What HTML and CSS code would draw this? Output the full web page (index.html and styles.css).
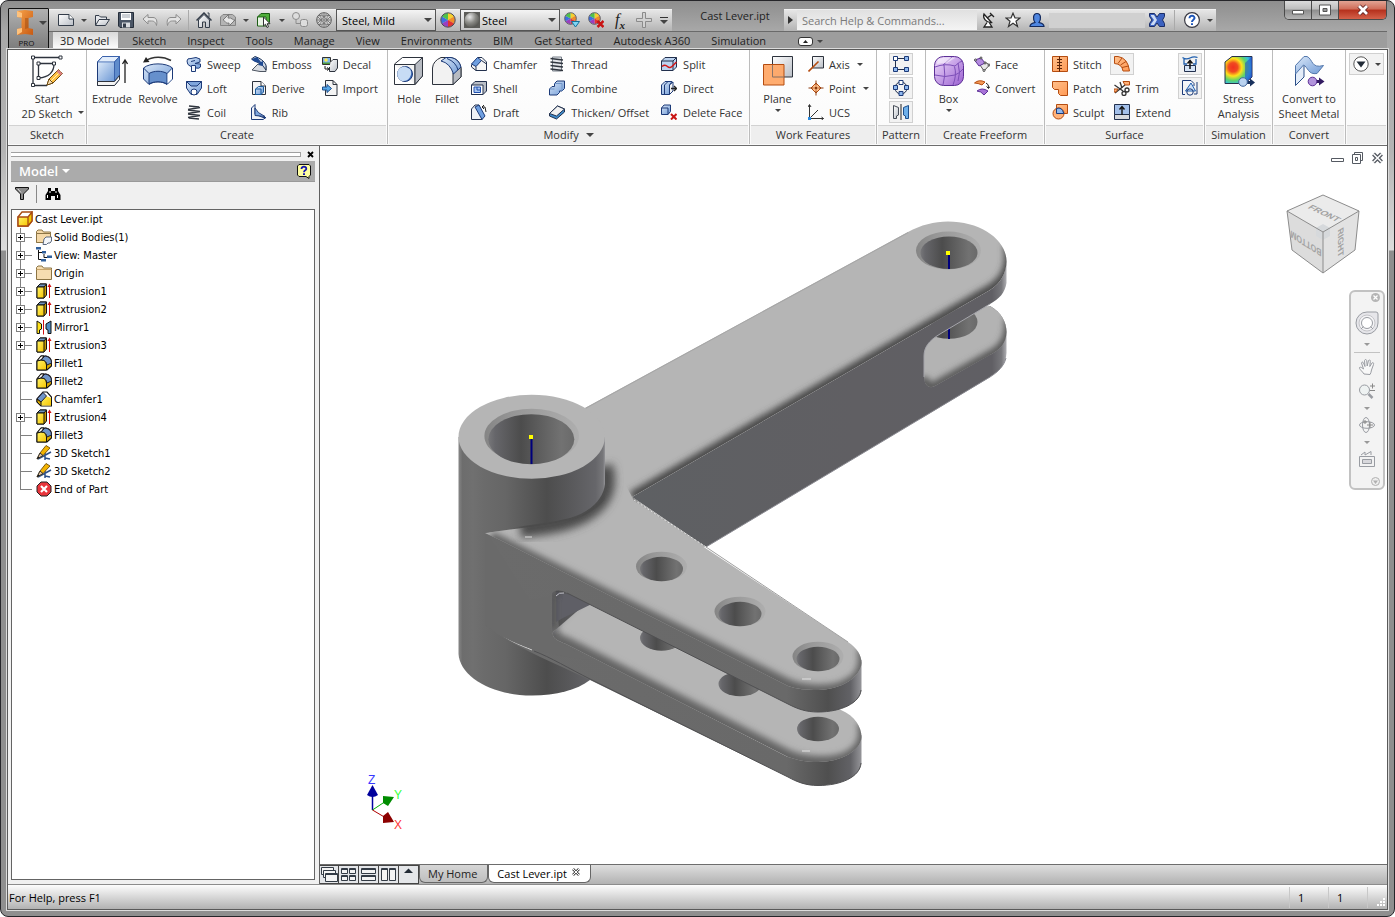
FILE: index.html
```html
<!DOCTYPE html>
<html lang="en">
<head>
  <meta charset="UTF-8">
  <title>Cast Lever.ipt</title>
  <meta name="viewport" content="width=device-width, initial-scale=1.0">
  <link rel="stylesheet" href="styles.css">
</head>
<body>

  <!-- icon sprite -->
  <svg class="sprite" aria-hidden="true">
    <defs>
      <linearGradient id="blue" x1="0" y1="0" x2="1" y2="1"><stop offset="0" stop-color="#dbe8f8"/><stop offset="1" stop-color="#6f9ad6"/></linearGradient>
      <linearGradient id="grey" x1="0" y1="0" x2="1" y2="1"><stop offset="0" stop-color="#fff"/><stop offset="1" stop-color="#b9bec6"/></linearGradient>
      <linearGradient id="orange" x1="0" y1="0" x2="1" y2="1"><stop offset="0" stop-color="#ffc08c"/><stop offset="1" stop-color="#ff9a55"/></linearGradient>
      <linearGradient id="purple" x1="0" y1="0" x2="1" y2="1"><stop offset="0" stop-color="#f0defc"/><stop offset="1" stop-color="#9a5fd0"/></linearGradient>
      <linearGradient id="yellow" x1="0" y1="0" x2="1" y2="1"><stop offset="0" stop-color="#fff36a"/><stop offset="1" stop-color="#f7c600"/></linearGradient>
      <linearGradient id="logo" x1="0" y1="0" x2="1" y2="1"><stop offset="0" stop-color="#f7a24a"/><stop offset="1" stop-color="#c85a12"/></linearGradient>
      <radialGradient id="ball" cx=".35" cy=".3" r=".8"><stop offset="0" stop-color="#e8e8e8"/><stop offset=".5" stop-color="#8b8b86"/><stop offset="1" stop-color="#4c4c48"/></radialGradient>
      <radialGradient id="heat" cx=".3" cy=".4" r=".85"><stop offset="0" stop-color="#f03020"/><stop offset=".2" stop-color="#f04a20"/><stop offset=".38" stop-color="#ffe21a"/><stop offset=".58" stop-color="#5fd36a"/><stop offset=".75" stop-color="#35bfe0"/><stop offset="1" stop-color="#2447c8"/></radialGradient>
    </defs>

    <symbol id="i-new" viewBox="0 0 16 16"><path d="M.5 2.500H11L15.500 7V13.500H.5Z" fill="url(#grey)" stroke="#333c49"/><path d="M11 2.500V7H15.500" fill="#fff" stroke="#333c49"/></symbol>
    <symbol id="i-open" viewBox="0 0 16 16"><path d="M1.500 13V3.500H5L6.500 5H12.500V7" fill="#e4e6ea" stroke="#333c49"/><path d="M1.500 13.500L5 7.500H15.500L11.500 13.500Z" fill="url(#grey)" stroke="#333c49"/></symbol>
    <symbol id="i-save" viewBox="0 0 16 16"><path d="M.5.5H15.500V15.500H2L.5 14Z" fill="#4b5666" stroke="#262e3a"/><path d="M3 1H13V8H3Z" fill="#fff"/><path d="M4 3H12M4 5H12" stroke="#9aa2ad"/><path d="M4 10.500H12V15.500H4Z" fill="#d9dce0"/><path d="M5 11.500H8V15.500H5Z" fill="#333c49"/></symbol>
    <symbol id="i-undo" viewBox="0 0 16 16"><path d="M1 7L6 2.500V5.500H11C14.500 5.500 15.500 9 14.500 13.500C13.500 10 12 9 9.500 9H6V12Z" fill="#e3e3e3" stroke="#8c8c8c"/></symbol>
    <symbol id="i-redo" viewBox="0 0 16 16"><path d="M15 7L10 2.500V5.500H5C1.500 5.500.5 9 1.500 13.500C2.500 10 4 9 6.500 9H10V12Z" fill="#e3e3e3" stroke="#8c8c8c"/></symbol>
    <symbol id="i-home" viewBox="0 0 16 16"><path d="M2.500 8V15.500H6.500V10H9.500V15.500H13.500V8L8 2.500Z" fill="url(#grey)" stroke="#333c49"/><path d="M11.500 1H13V5" fill="none" stroke="#333c49"/><path d="M.5 8.500L8 1L15.500 8.500" fill="none" stroke="#333c49" stroke-width="1.500"/></symbol>
    <symbol id="i-update" viewBox="0 0 16 16"><path d="M.5 13.500V5L3 2.500H12.500L15.500 5V13.500Z" fill="#b4b4b4" stroke="#858585"/><path d="M3 8L9 2L8 6C12 5 13 9 15 8L9 14V11C5 12 5 8 3 8Z" fill="#e6e6e6" stroke="#777"/></symbol>
    <symbol id="i-select" viewBox="0 0 16 16"><path d="M1.500 5L5 1.500H13.500V10L10.500 14H1.500Z" fill="#4fae3a" stroke="#1c5c14"/><path d="M1.500 5H10V14" fill="none" stroke="#1c5c14"/><path d="M2 5.500H9.500V13.500H2Z" fill="#e8f3e4"/><path d="M7.500 5V14L9.500 12.200L11 15.500L12.500 14.800L11.200 11.700H14Z" fill="#fff" stroke="#333"/></symbol>
    <symbol id="i-link" viewBox="0 0 16 16"><circle cx="4" cy="4" r="3.500" fill="#ddd" stroke="#8c8c8c"/><path d="M4 7.500V11.500H8" fill="none" stroke="#8c8c8c"/><rect x="8.500" y="7.500" width="7" height="7" rx="2" fill="#ddd" stroke="#8c8c8c"/></symbol>
    <symbol id="i-globe" viewBox="0 0 16 16"><circle cx="8" cy="8" r="7.300" fill="#ddd" stroke="#555"/><path d="M1 8H15M8 1V15M3 3Q8 8 3 13M13 3Q8 8 13 13M3 3Q8 6 13 3M3 13Q8 10 13 13M5 1.500L14 11M2 5L11 14.500M11 1.500L2 11M14 5L5 14.500" fill="none" stroke="#777"/></symbol>
    <symbol id="i-wheel" viewBox="0 0 16 16"><path d="M8 8V1A7 7 0 0 1 14 4.500Z" fill="#f6d02c"/><path d="M8 8L14 4.500A7 7 0 0 1 14 11.500Z" fill="#f08c28"/><path d="M8 8L14 11.500A7 7 0 0 1 8 15Z" fill="#e23232"/><path d="M8 8V15A7 7 0 0 1 2 11.500Z" fill="#9a3fc0"/><path d="M8 8L2 11.500A7 7 0 0 1 2 4.500Z" fill="#3d6fe0"/><path d="M8 8L2 4.500A7 7 0 0 1 8 1Z" fill="#4fc04a"/><circle cx="8" cy="8" r="7.200" fill="none" stroke="#4a4a55"/></symbol>
    <symbol id="i-wheel-down" viewBox="0 0 16 16"><use href="#i-wheel" width="13" height="13"/><path d="M7.500 9.500H15.500L11.500 15Z" fill="#7fd6f4" stroke="#14709c"/></symbol>
    <symbol id="i-wheel-x" viewBox="0 0 16 16"><use href="#i-wheel" width="13" height="13"/><path d="M9.500 9L15.500 15M15.500 9L9.500 15" stroke="#c81414" stroke-width="2.500"/></symbol>
    <symbol id="i-ball" viewBox="0 0 16 16"><path d="M0 0H16V16H0Z" fill="#5c5c58"/><circle cx="8" cy="8" r="7.500" fill="url(#ball)"/></symbol>
    <symbol id="i-plus" viewBox="0 0 16 16"><path d="M6.500.500H9.500V6.500H15.500V9.500H9.500V15.500H6.500V9.500H.5V6.500H6.500Z" fill="#d2d2d2" stroke="#8b8b8b"/></symbol>
    <symbol id="i-dish" viewBox="0 0 16 16"><path d="M3 2C1.500 6 5 11 10.500 10.500Z" fill="#fff" stroke="#222" stroke-width="1.300"/><path d="M6 6L11 2.500M9 1L13 5" stroke="#222" stroke-width="1.300"/><path d="M6 10.500L3 15H11L8.500 11" fill="#fff" stroke="#222" stroke-width="1.300"/></symbol>
    <symbol id="i-star" viewBox="0 0 16 16"><path d="M8 1.200L10 6H15L11 9.200L12.500 14.500L8 11.300L3.500 14.500L5 9.200L1 6H6Z" fill="#fff" stroke="#333" stroke-width="1.200"/></symbol>
    <symbol id="i-user" viewBox="0 0 16 16"><path d="M1 14.500C1 11.500 4 11 6 10.500C4 8 3.500 1.500 8 1.500S12 8 10 10.500C12 11 15 11.500 15 14.500Z" fill="#4f86e0" stroke="#12285c" stroke-width="1.200"/></symbol>
    <symbol id="i-exchange" viewBox="0 0 16 16"><path d="M.5 1.500H5.500L8 5L10.500 1.500H15.500V4.500L13.500 8L15.500 11.500V14.500H10.500L8 11L5.500 14.500H.5V11.500L3 8L.5 4.500Z" fill="#3c62c0" stroke="#1b2d66"/><path d="M2 3H5L8 8L5 13H2V12L5 8L2 4Z" fill="#cddcf5"/></symbol>
    <symbol id="i-help" viewBox="0 0 16 16"><circle cx="8" cy="8" r="7.400" fill="#fff" stroke="#3a3a44" stroke-width="1.200"/><path d="M5.500 6.200C5.500 2.800 10.700 3 10.500 6.200C10.300 7.800 8 7.700 8 10" fill="none" stroke="#1d55b8" stroke-width="2"/><path d="M7 11.200H9V13H7Z" fill="#1d55b8"/></symbol>

    <symbol id="b-sketch" viewBox="0 0 32 32"><path d="M2 30.500V2.500H30M7.500 23V8.500H23Q23 22 7.500 23M2 30.500H16" fill="none" stroke="#2d333d" stroke-width="1.300"/><g fill="#fff" stroke="#2d333d"><path d="M.5 1H3.500V4H.5ZM28 1H31V4H28ZM.5 28.500H3.500V31.500H.5ZM6 7H9V10H6ZM21.500 7H24.500V10H21.500ZM6 21.500H9V24.500H6Z"/></g><path d="M16 30L18 24L27.500 14.500L31.500 18.500L22 28Z" fill="#ffc043" stroke="#6d4a10"/><path d="M16 30L18 24L22 28Z" fill="#f6dcb2" stroke="#6d4a10"/><path d="M20 26L29.500 16.500" stroke="#fff2b0"/><path d="M27.500 14.500L31.500 18.500L29.500 20.500L25.500 16.500Z" fill="#d98080"/></symbol>
    <symbol id="b-extrude" viewBox="0 0 32 32"><path d="M1.500 7L6.500 1.500H23.500V24L18.500 30.500H1.500Z" fill="#8fb1e2" stroke="#1c3a78"/><path d="M1.500 7H18.500L23.500 1.500H6.500Z" fill="#e2edfb" stroke="#3a62ac"/><path d="M2 7.500H18V26H2Z" fill="url(#blue)"/><path d="M18.500 7V26L23.500 20V1.500Z" fill="#5f8ccc" stroke="#3a62ac"/><path d="M1.500 26.500H18.500L23.500 20.500V24.500L18.500 30.500H1.500Z" fill="#f4f4f4" stroke="#2d333d"/><path d="M29 28V5M26.500 9L29 5L31.500 9" stroke="#222" stroke-width="1.300" fill="none"/></symbol>
    <symbol id="b-revolve" viewBox="0 0 32 32"><path d="M3 6C11 1 21 1 29 5.500" fill="none" stroke="#333" stroke-width="1.500"/><path d="M1 7.500L7.500 7L4 2Z" fill="#222"/><path d="M1.500 13C8 7.500 24 7.500 30.500 13V24L25 29.500C20 26 12 26 7 29.500L1.500 24Z" fill="url(#blue)" stroke="#1c3a78"/><path d="M7 18.500C12 15.500 20 15.500 25 18.500V29C20 26 12 26 7 29Z" fill="#6690cc" stroke="#1c3a78"/><path d="M1.500 13L7 18.500M30.500 13L25 18.500" stroke="#1c3a78"/><path d="M25.500 19L30 14V24L25.500 28.500Z" fill="#fff"/></symbol>
    <symbol id="b-hole" viewBox="0 0 32 32"><path d="M1.500 9L9.500 2.500H29.500V21L22 29.500H1.500Z" fill="#fff" stroke="#2d333d"/><path d="M1.500 9.500H22V29.500" fill="#f3f3f3" stroke="#2d333d"/><path d="M22 9.500L29.500 2.500V21L22 29.500Z" fill="#b7bbc2" stroke="#2d333d"/><circle cx="12" cy="19" r="7.500" fill="#3e6cb8" stroke="#1c3a78"/><path d="M12 11.500A7.500 7.500 0 0 0 9 26A8 8 0 0 0 17 14Z" fill="#c7dcf5"/></symbol>
    <symbol id="b-fillet" viewBox="0 0 32 32"><path d="M1.500 29.500V13Q2 6 10 2.500H20Q29 4 30 14V22L22 29.500Z" fill="#f2f2f2" stroke="#2d333d"/><path d="M22 29.500V18L30 12V22Z" fill="#b7bbc2" stroke="#2d333d"/><path d="M10 6Q19 8 22.500 19L30 12Q28 4 20 2.500H15Z" fill="url(#blue)" stroke="#1c3a78"/><path d="M16 3.500Q25 7 27 15" fill="none" stroke="#1c3a78"/></symbol>
    <symbol id="b-plane" viewBox="0 0 32 32"><path d="M10.500 1.500H30.500V22H10.500Z" fill="url(#grey)" stroke="#2d333d"/><path d="M1.500 9.500H22V30H1.500Z" fill="#ffa563" fill-opacity=".92" stroke="#b44c10"/><path d="M10.500 10V22H22" fill="none" stroke="#8a7468"/></symbol>
    <symbol id="b-box" viewBox="0 0 32 32"><rect x="1.500" y="1.500" width="29" height="29" rx="9" fill="url(#purple)" stroke="#5c2f96"/><path d="M2 12Q12 8 22 11Q27 6 30 6M21.500 11.500Q24 20 20 30M11 10Q13 20 10 30M2 20Q12 23 22 20Q27 18 30 14M10 10L19 2M25 8Q28 18 25 26" fill="none" stroke="#7d4fb8"/><path d="M5 4Q14 1 22 3L14 8Q8 8 4 9Z" fill="#fff" opacity=".5"/></symbol>
    <symbol id="b-stress" viewBox="0 0 32 32"><path d="M2 7L9 1.500H29V22L22 28.500H2Z" fill="url(#heat)" stroke="#26304a"/><path d="M22 8L29 1.500V22L22 28Z" fill="#2447c8" opacity=".55"/><path d="M24 27.500H28" stroke="#18305c" stroke-width="3"/><path d="M27 23.500L32 27.500L27 31.500Z" fill="#18305c"/><circle cx="20" cy="27" r="4.300" fill="#b9d2f0" stroke="#44689c"/></symbol>
    <symbol id="b-sheet" viewBox="0 0 32 32"><path d="M2.500 12L11 4V22L2.500 30.500Z" fill="#e4edf9" stroke="#2c4f88"/><path d="M2.500 10.500L11 1.500H14C20 4 18 14 30.500 10.500L24 18.500C15 20 15 12 10.500 10L2.500 19Z" fill="url(#blue)" stroke="#5478ac"/><path d="M23 26.500H28" stroke="#321a60" stroke-width="3"/><path d="M26 22.500L31.500 26.500L26 30.500Z" fill="#321a60"/><circle cx="19.500" cy="26.500" r="4.300" fill="#b294dc" stroke="#5c2f96"/></symbol>

    <symbol id="s-sweep" viewBox="0 0 16 16"><path d="M1 5Q1 2 5 2.500L10 1.500L14 3V6L9 7.500L14.500 8V11Q13 13 10 12L4 10Q1 9 1 5Z" fill="url(#blue)" stroke="#1c3a78"/><path d="M5 5.500L9 4.500M5.500 9.500H9.500V15.500H5.500Z" fill="#f4f8fd" stroke="#1c3a78"/></symbol>
    <symbol id="s-loft" viewBox="0 0 16 16"><path d="M.5 1.500H15.500V8L11 14.500H5L.5 8Z" fill="url(#blue)" stroke="#1c3a78"/><path d="M.5 1.500H15.500L11 6H5Z" fill="#7fa6dc" stroke="#1c3a78"/><circle cx="8" cy="12" r="3" fill="#fff" stroke="#1c3a78"/></symbol>
    <symbol id="s-coil" viewBox="0 0 16 16"><path d="M3 2L13 3M2 5.500L14 3.500M2 6L14 7.500M2 9.500L14 7.500M2 10L14 11.500M2 13.500L14 11.500M3 14L13 15" stroke="#30363f" stroke-width="1.600"/></symbol>
    <symbol id="s-emboss" viewBox="0 0 16 16"><path d="M1 14L7 8L15 10V15.500H9Z" fill="#d8dce2" stroke="#4d5561"/><path d="M.5 3L4 .5Q12 3 15 9V14Q12 8 6 6Z" fill="#cfd9e8" stroke="#1d3357"/><path d="M2 2.500L6 1L10 6L12 5V10L7 9L9 7L4 6L1 4Z" fill="#1f4a93"/></symbol>
    <symbol id="s-derive" viewBox="0 0 16 16"><path d="M1.500 14.500V1.500H10L14.500 6V14.500Z" fill="#f4f4f4" stroke="#2d333d"/><path d="M10 1.500V6H14.500" fill="#fff" stroke="#2d333d"/><path d="M4.500 9L7.500 6.500H12.500V12L10 14.500H4.500Z" fill="url(#blue)" stroke="#1c5c9c"/><path d="M4.500 9H10V14.500" fill="none" stroke="#1c5c9c"/></symbol>
    <symbol id="s-rib" viewBox="0 0 16 16"><path d="M.5 4L4 .5V10L12 13.500H15L12 15.500H.5Z" fill="#f0f3f8" stroke="#1c3a78"/><path d="M4 4Q6 9 14 12.500L4 11.500Z" fill="#7fa6dc" stroke="#1c3a78"/></symbol>
    <symbol id="s-decal" viewBox="0 0 16 16"><path d="M.5 1.500H8.500V8.500H.5Z" fill="#7db4ef" stroke="#333"/><circle cx="4" cy="4" r="1.800" fill="#ffe94f"/><path d="M1 6.500H8V8H1Z" fill="#4f9c3a"/><path d="M8.500 6L11 3.500H15.500V12L13 15.500H7.500V11" fill="url(#grey)" stroke="#2d333d"/><path d="M3 10V13H6.500M5 11.500L7 13L5 14.500" fill="none" stroke="#222"/></symbol>
    <symbol id="s-import" viewBox="0 0 16 16"><path d="M3.500.5H11L15 4.500V15.500H3.500Z" fill="#f4f4f4" stroke="#2d333d"/><path d="M11 .5V4.500H15" fill="none" stroke="#2d333d"/><path d="M.5 7H5V4.500L9.500 8.500L5 12.500V10H.5Z" fill="#58a9ea" stroke="#1d4f8c"/></symbol>
    <symbol id="s-chamfer" viewBox="0 0 16 16"><path d="M.5 9L7 1.500H11L15.500 6V14.500H5L.5 11Z" fill="#f6f6f6" stroke="#22304d"/><path d="M.5 8L6.500 1.500L10.500 4.500L5 10.500Z" fill="#6f9fe0" stroke="#1c3a78"/><path d="M5 10.500V14.500M10.500 4.500L15.500 8" stroke="#22304d" fill="none"/></symbol>
    <symbol id="s-shell" viewBox="0 0 16 16"><path d="M.5 5L4 1.500H15.500V11L12 14.500H.5Z" fill="#b9bec6" stroke="#22304d"/><path d="M.5 5H12V14.500H.5Z" fill="#fff" stroke="#22304d"/><path d="M3 7H9.500V12.500H3Z" fill="#a9c6f0" stroke="#1f4fae"/><path d="M6 7V10H9.500" fill="none" stroke="#1f4fae"/></symbol>
    <symbol id="s-draft" viewBox="0 0 16 16"><path d="M.5 15.500V5L4 1H8L11 15.500Z" fill="#eef1f6" stroke="#22304d"/><path d="M4 3L8 1L14 12L11 15.500Z" fill="#6f9fe0" stroke="#1c3a78"/><path d="M11 3H14L15 8M13 1L11 3L13 5" fill="none" stroke="#222"/></symbol>
    <symbol id="s-thread" viewBox="0 0 16 16"><path d="M3.500 1H12.500V15H3.500Z" fill="#e4e6ea" stroke="#777e88"/><path d="M1.500 2.500L14 4M1.500 6L14 7.500M1.500 9.500L14 11M1.500 13L14 14.500" stroke="#30363f" stroke-width="1.300"/></symbol>
    <symbol id="s-combine" viewBox="0 0 16 16"><path d="M.5 9L3 6.500H5.500V3.500L8 1H15.500V8.500L13 11H10.500V12.500L8 15H.5Z" fill="url(#blue)" stroke="#1c3a78"/><path d="M5.500 3.500H13V11M.5 9H5.500" fill="none" stroke="#6f94c8"/></symbol>
    <symbol id="s-thicken" viewBox="0 0 16 16"><path d="M.5 9.500L8.500 2L15.500 5V8L7.500 15L.5 12Z" fill="#3f8ccc" stroke="#22304d"/><path d="M.5 9.500L8.500 2L15.500 5L7.500 12Z" fill="#f2f2f2" stroke="#22304d"/></symbol>
    <symbol id="s-split" viewBox="0 0 16 16"><path d="M.5 5L4 1.500H15.500V11L12 14.500H.5Z" fill="#bcd3f0" stroke="#22304d"/><path d="M.5 5H12V14.500M12 5L15.500 1.500" fill="none" stroke="#22304d"/><path d="M1 10.500Q4 8 6.500 10.500T12 9.500L15.500 6" fill="none" stroke="#d01818" stroke-width="1.500"/></symbol>
    <symbol id="s-direct" viewBox="0 0 16 16"><path d="M.5 5L4 1.500H11L8.500 5V14.500H.5Z" fill="url(#blue)" stroke="#1c3a78"/><path d="M3.500 5V14.500M3.500 5L7 1.500M8.500 5L12 2V11L8.500 14.500Z" fill="#f4f4f4" stroke="#1c3a78"/><path d="M10 8.500H15M13 6L15.500 8.500L13 11" fill="none" stroke="#222" stroke-width="1.300"/></symbol>
    <symbol id="s-delface" viewBox="0 0 16 16"><path d="M.5 4L3 1H9.500V7.500L7 10.500H.5Z" fill="url(#blue)" stroke="#1c3a78"/><path d="M.5 4H7V10.500" fill="none" stroke="#1c3a78"/><path d="M10 10L15.500 15.500M15.500 10L10 15.500" stroke="#c81414" stroke-width="2"/></symbol>
    <symbol id="s-axis" viewBox="0 0 16 16"><path d="M4.500.5H15.500V12H4.500Z" fill="url(#grey)" stroke="#2d333d"/><path d="M.5 15.500L10.500 5.500" stroke="#b44c10" stroke-width="1.600"/></symbol>
    <symbol id="s-point" viewBox="0 0 16 16"><path d="M8 3L13 8L8 13L3 8Z" fill="#ffc08c" stroke="#b44c10"/><path d="M8 .5V5.500M8 10.500V15.500M.5 8H5.500M10.500 8H15.500" stroke="#8c3a0c"/><circle cx="8" cy="8" r="1.500" fill="#8c3a0c"/></symbol>
    <symbol id="s-ucs" viewBox="0 0 16 16"><path d="M1.500 13V1M2 14.500H15.500M2 14L10 6M0 3L1.500.5L3 3M13.500 13L15.500 14.500L13.500 16" fill="none" stroke="#333"/><path d="M0 13H3V16H0Z" fill="#2a8ae0"/></symbol>
    <symbol id="s-rect" viewBox="0 0 16 16"><path d="M2.500 2.500H13.500M2.500 2.500V13.500H13.500" fill="none" stroke="#22304d"/><g fill="#8fb8ee" stroke="#1c3a78"><path d="M.5.5H4.500V4.500H.5ZM11.500 .5H15.500V4.500H11.500ZM.5 11.500H4.500V15.500H.5ZM11.500 11.500H15.500V15.500H11.500Z"/></g><path d="M1 1H4V4H1Z" fill="#fff"/></symbol>
    <symbol id="s-circ" viewBox="0 0 16 16"><circle cx="8" cy="8" r="6" fill="none" stroke="#22304d"/><g fill="#8fb8ee" stroke="#1c3a78"><path d="M.5 5.500H4.500V9.500H.5ZM11.500 5.500H15.500V9.500H11.500ZM6 11.500H10V15.500H6Z"/><path d="M6 .5H10V4.500H6Z" fill="#fff"/></g></symbol>
    <symbol id="s-mirror" viewBox="0 0 16 16"><path d="M.5 1.500L5.500 3.500V11L3.500 12V14.500H.5Z" fill="url(#grey)" stroke="#444b56"/><path d="M8 0V16" stroke="#222"/><path d="M15.500 1.500L10.500 3.500V11L12.500 12V14.500H15.500Z" fill="#6fb0ea" stroke="#1d4f8c"/></symbol>
    <symbol id="s-face" viewBox="0 0 16 16"><path d="M6 9L11 6L15.500 9L10 15Z" fill="#e8e8e8" stroke="#555"/><path d="M.5 4L7 2L11 7L5 10Z" fill="#b48be0" stroke="#5c2f96"/><g fill="#fff" stroke="#444"><circle cx="1.500" cy="4" r="1"/><circle cx="7" cy="2" r="1"/><circle cx="11" cy="7" r="1"/><circle cx="15" cy="9" r="1"/><circle cx="10" cy="14.500" r="1"/></g></symbol>
    <symbol id="s-convert" viewBox="0 0 16 16"><path d="M.5 3Q5-1 11 2L8 5Q4 3 .5 3Z" fill="#f59a58" stroke="#b44c10"/><path d="M3 11Q8 7 14 11L10 15Q7 11 3 11Z" fill="#a873d8" stroke="#5c2f96"/><path d="M12 3Q15 4 14.500 8M12.500 6.500L14.500 8.500L16 6.500" fill="none" stroke="#222"/></symbol>
    <symbol id="s-stitch" viewBox="0 0 16 16"><path d="M.5.5H15.500V15.500H.5Z" fill="url(#orange)" stroke="#b44c10"/><path d="M7.500 .5V15.500M5 3.500H10M5 6.500H10M5 9.500H10M5 12.500H10" stroke="#5c2408"/></symbol>
    <symbol id="s-patch" viewBox="0 0 16 16"><path d="M.5 1.500H15.500V15.500H8.500L6.500 13.500V9.500H2.500L.5 7.500Z" fill="url(#orange)" stroke="#b44c10"/></symbol>
    <symbol id="s-sculpt" viewBox="0 0 16 16"><path d="M4.500 .5H15.500V9.500H4.500Z" fill="url(#orange)" stroke="#b44c10"/><circle cx="6.500" cy="9.500" r="5.500" fill="#ffb27a" stroke="#b44c10"/><path d="M4.500 4.500Q10 2.500 11.800 9.500H4.500Z" fill="#8fb8ee" stroke="#1c3a78"/></symbol>
    <symbol id="s-ruled" viewBox="0 0 16 16"><path d="M.5.500H4Q14 2 15.500 15H9Q8 8 .5 7.500Z" fill="url(#orange)" stroke="#b44c10"/><path d="M4 7.500L8 2M6.500 9L12 5.500M8 11.500L14.500 10" stroke="#b44c10"/></symbol>
    <symbol id="s-trim" viewBox="0 0 16 16"><path d="M.5 5L9 11M1 13L11 5" stroke="#333" stroke-width="1.300"/><path d="M9 1.500H15.500V5H11Z" fill="#ffb27a" stroke="#b44c10"/><path d="M0 9H4L2 12H0Z" fill="#ffb27a" stroke="#b44c10"/><circle cx="13" cy="10" r="2" fill="none" stroke="#333" stroke-width="1.300"/><circle cx="10" cy="13.500" r="2" fill="none" stroke="#333" stroke-width="1.300"/><path d="M6 2L8 8" stroke="#333" stroke-width="1.300"/></symbol>
    <symbol id="s-extend" viewBox="0 0 16 16"><path d="M.5.5H15.500V10.500H.5Z" fill="#a3c0ea" stroke="#22304d"/><path d="M.5 10.500H15.500V15.500H.5Z" fill="#d6d9de" stroke="#22304d"/><path d="M8 11V3M5.500 5.500L8 2.500L10.500 5.500" fill="none" stroke="#111" stroke-width="1.400"/></symbol>
    <symbol id="s-replace" viewBox="0 0 16 16"><path d="M.5 1.500Q4 4 8 2T15.500 1.500M2 3V8H5M14 3V8H11" fill="none" stroke="#1f5fae" stroke-width="1.300"/><path d="M2.500 9.500H13.500V15.500H2.500Z" fill="#d6e4f6" stroke="#22304d"/><path d="M8 13V5M5.500 7.500L8 4.500L10.500 7.500" fill="none" stroke="#111" stroke-width="1.500"/></symbol>
    <symbol id="s-repair" viewBox="0 0 16 16"><path d="M.5 4V.500H9L12 3.500V6M.5 4V14.500H3" fill="#f4f6fa" stroke="#1c3a78"/><path d="M3.500 11L9 3L13.500 11Z" fill="#cfe0f6" stroke="#1f5fae"/><circle cx="8" cy="12" r="3.200" fill="none" stroke="#1c3a78"/><path d="M15 2V14H12" fill="none" stroke="#1c3a78"/></symbol>
    <symbol id="s-more" viewBox="0 0 16 16"><circle cx="8" cy="8" r="7.200" fill="#fff" stroke="#555"/><path d="M3.500 5.500H12.500L8 11.500Z" fill="#222b36"/></symbol>

    <symbol id="t-part" viewBox="0 0 16 16"><path d="M1 6L5 1H15V10L11 15H1Z" fill="#fff" stroke="#a84a10" stroke-width="1.300"/><path d="M1.500 6H11V15H1.500Z" fill="url(#yellow)"/><path d="M11 6L15 1V10L11 15Z" fill="#f2c800"/><path d="M1 6H11V15H1ZM11 6L15 1V10L11 15" fill="none" stroke="#a84a10" stroke-width="1.300"/></symbol>
    <symbol id="t-bodies" viewBox="0 0 16 16"><path d="M.5 13.500V2.500L2 1H6L7.500 3H14.500V9" fill="#f5d9a8" stroke="#8c7444"/><path d="M.5 13.500V4.500H14.500V13.500Z" fill="#f5d9a8" stroke="#8c7444"/><path d="M8 10L10 8H15.500V12L14 14H12L10.500 15.500H7Z" fill="#f4f6fa" stroke="#5c6a80"/></symbol>
    <symbol id="t-view" viewBox="0 0 16 16"><path d="M2.500 3V12.500H5M2.500 5.500H6M8 7V10.500H11" fill="none" stroke="#111"/><path d="M0 0H5V2.500H0ZM6 4H10V6.500H6ZM11 8.500H16V11H11ZM5 12H10V14.500H5Z" fill="#2f5f9c"/></symbol>
    <symbol id="t-folder" viewBox="0 0 16 16"><path d="M.5 14.500V2.500L2 1H6L7.500 3H15.500V14.500Z" fill="#f5dcb0" stroke="#8c7444"/><path d="M.5 4.500H15.500" stroke="#c9a56a"/></symbol>
    <symbol id="t-extrude" viewBox="0 0 16 16"><path d="M1 4L4 1H10.500V12L8 15H1Z" fill="#c79a00" stroke="#111"/><path d="M1 4L4 1H10.500L8 4Z" fill="#6f94c0" stroke="#111"/><path d="M1 4H8V15H1Z" fill="url(#yellow)" stroke="#111"/><path d="M13.500 15V3" stroke="#d01010"/><path d="M11.500 4H15.500L13.500 .500Z" fill="#d01010"/></symbol>
    <symbol id="t-mirror" viewBox="0 0 16 16"><path d="M1 2L5.500 5V10L3.500 11V14.500H1Z" fill="#ffe21a" stroke="#111"/><path d="M7.500 1V15.500" stroke="#d01010"/><path d="M15 2L10 5V10L12 11V14.500H15Z" fill="#4f8cc0" stroke="#111"/></symbol>
    <symbol id="t-fillet" viewBox="0 0 16 16"><path d="M1 15V6L5 1H10Q15.500 2 15.500 8V11L11 15Z" fill="#d8a800" stroke="#111" stroke-width="1.200"/><path d="M1 6L5 1H8L5 5Z" fill="#fff" stroke="#111"/><path d="M5 5L9 1Q15.500 2 15.500 8L11 10Q10 5 5 5Z" fill="#6f94c8" stroke="#223"/><path d="M1 6Q10 3 10.500 10V15H1Z" fill="url(#yellow)" stroke="#111"/></symbol>
    <symbol id="t-chamfer" viewBox="0 0 16 16"><path d="M1 8L7 1H11L15.500 6V15H5L1 11Z" fill="#fff" stroke="#111" stroke-width="1.200"/><path d="M5 11L10 5L15 7V14.500H5Z" fill="url(#yellow)"/><path d="M1 8L7 1.500L10.500 5L5 11Z" fill="#6f94c8" stroke="#223"/><path d="M1 8V11L5 15V11Z" fill="#d8a800" stroke="#111"/></symbol>
    <symbol id="t-sketch" viewBox="0 0 16 16"><path d="M9 2V15M2 14L15 7M9 13L14 14" stroke="#2c4f88" stroke-width="1.500"/><path d="M1 14L4 8L10 .500L14 3L7 10.500Z" fill="#f4b400" stroke="#7c5a10"/><path d="M1 14L4 8L7 10.500Z" fill="#e8c8a0" stroke="#333"/><path d="M1 14L2.300 11.500L3.500 12.500Z" fill="#111"/></symbol>
    <symbol id="t-end" viewBox="0 0 16 16"><path d="M5 1H11L15 5V11L11 15H5L1 11V5Z" fill="#e8353c" stroke="#222"/><path d="M5 5L11 11M11 5L5 11" stroke="#fff" stroke-width="2.200"/></symbol>
  </svg>

  <div class="window">
    <div class="chrome">
      <button class="app-button" aria-label="Application menu">
        <svg width="20" height="28" viewBox="0 0 20 28"><path d="M2 2L10 1L18 2V8L13.500 9V19L18 20V26L10 25L2 26V20L6.500 19V9L2 8Z" fill="url(#logo)"/><path d="M2 2L7 4V8.500L2 8ZM7 19L2 20V26L7 23Z" fill="#ffc27c"/><path d="M10 9L13.500 9V19L10 20Z" fill="#a04c10" opacity=".5"/></svg>
        <span class="arrow large"></span>
        <span class="edition">PRO</span>
      </button>

      <header class="titlebar">
        <div class="quick-access">
          <button class="qa" aria-label="New"><svg><use href="#i-new"/></svg></button>
          <button class="qa-drop" aria-label="New options"><span class="arrow"></span></button>
          <button class="qa" aria-label="Open"><svg><use href="#i-open"/></svg></button>
          <button class="qa" aria-label="Save"><svg><use href="#i-save"/></svg></button>
          <button class="qa" aria-label="Undo"><svg><use href="#i-undo"/></svg></button>
          <button class="qa" aria-label="Redo"><svg><use href="#i-redo"/></svg></button>
          <span class="divider"></span>
          <button class="qa" aria-label="Home"><svg><use href="#i-home"/></svg></button>
          <button class="qa" aria-label="Update"><svg><use href="#i-update"/></svg></button>
          <button class="qa-drop" aria-label="Update options"><span class="arrow"></span></button>
          <button class="qa" aria-label="Select"><svg><use href="#i-select"/></svg></button>
          <button class="qa-drop" aria-label="Select options"><span class="arrow"></span></button>
          <button class="qa" aria-label="Relationships"><svg><use href="#i-link"/></svg></button>
          <button class="qa" aria-label="Material browser"><svg><use href="#i-globe"/></svg></button>
          <div class="combo">
            <select aria-label="Material"><option>Steel, Mild</option></select>
            <span class="arrow"></span>
          </div>
          <button class="qa" aria-label="Appearance browser"><svg><use href="#i-wheel"/></svg></button>
          <div class="combo">
            <svg><use href="#i-ball"/></svg>
            <select aria-label="Appearance"><option>Steel</option></select>
            <span class="arrow"></span>
          </div>
          <button class="qa" aria-label="Adjust"><svg><use href="#i-wheel-down"/></svg></button>
          <button class="qa" aria-label="Clear"><svg><use href="#i-wheel-x"/></svg></button>
          <button class="qa fx" aria-label="Parameters"><i>f<sub>x</sub></i></button>
          <button class="qa" aria-label="Add"><svg><use href="#i-plus"/></svg></button>
          <button class="qa-more" aria-label="Customize"><span class="bar"></span><span class="arrow large"></span></button>
        </div>
        <div class="doc-title">Cast Lever.ipt</div>
        <div class="info-center">
          <button class="expand" aria-label="Collapse search"></button>
          <input type="text" placeholder="Search Help &amp; Commands..." aria-label="Search Help &amp; Commands">
          <button class="qa" aria-label="Communication center"><svg><use href="#i-dish"/></svg></button>
          <button class="qa" aria-label="Favorites"><svg><use href="#i-star"/></svg></button>
          <button class="qa" aria-label="Sign in"><svg><use href="#i-user"/></svg></button>
          <span class="user-name"></span>
          <button class="qa" aria-label="Exchange apps"><svg><use href="#i-exchange"/></svg></button>
          <span class="divider"></span>
          <button class="qa" aria-label="Help"><svg><use href="#i-help"/></svg></button>
          <button class="qa-drop" aria-label="Help options"><span class="arrow"></span></button>
        </div>
        <div class="window-buttons">
          <button class="win" aria-label="Minimize"><svg width="14" height="12" viewBox="0 0 14 12"><path d="M1.500 6.500H12.500V10H1.500Z" fill="#fff" stroke="#555"/></svg></button>
          <button class="win" aria-label="Maximize"><svg width="14" height="12" viewBox="0 0 14 12"><path d="M1.500 1H12.500V11H1.500Z" fill="#fff" stroke="#555"/><path d="M5 4.500H9V7.500H5Z" fill="#999" stroke="#555"/></svg></button>
          <button class="win close" aria-label="Close"><svg width="14" height="12" viewBox="0 0 14 12"><path d="M3 2L11 10M11 2L3 10" stroke="#5c2020" stroke-width="4.500"/><path d="M3 2L11 10M11 2L3 10" stroke="#fff" stroke-width="2.800"/></svg></button>
        </div>
      </header>

      <nav class="tabs">
        <a href="#" class="active">3D Model</a>
        <a href="#">Sketch</a>
        <a href="#">Inspect</a>
        <a href="#">Tools</a>
        <a href="#">Manage</a>
        <a href="#">View</a>
        <a href="#">Environments</a>
        <a href="#">BIM</a>
        <a href="#">Get Started</a>
        <a href="#">Autodesk A360</a>
        <a href="#">Simulation</a>
        <button class="minimize-ribbon" aria-label="Minimize ribbon">
          <svg width="15" height="9" viewBox="0 0 15 9"><rect x=".5" y=".5" width="14" height="8" rx="2.500" fill="#fff" stroke="#333"/><path d="M5 6L7.500 3L10 6Z" fill="#222"/></svg>
          <span class="arrow"></span>
        </button>
      </nav>
    </div>

    <div class="client">
      <div class="ribbon">
        <section class="panel">
          <div class="tools">
            <button class="big wide"><svg><use href="#b-sketch"/></svg><span>Start<br>2D Sketch</span><span class="arrow corner"></span></button>
          </div>
          <h2>Sketch</h2>
        </section>

        <section class="panel">
          <div class="tools">
            <button class="big"><svg><use href="#b-extrude"/></svg><span>Extrude</span></button>
            <button class="big"><svg><use href="#b-revolve"/></svg><span>Revolve</span></button>
            <div class="stack">
              <button class="tool"><svg><use href="#s-sweep"/></svg>Sweep</button>
              <button class="tool"><svg><use href="#s-loft"/></svg>Loft</button>
              <button class="tool"><svg><use href="#s-coil"/></svg>Coil</button>
            </div>
            <div class="stack">
              <button class="tool"><svg><use href="#s-emboss"/></svg>Emboss</button>
              <button class="tool"><svg><use href="#s-derive"/></svg>Derive</button>
              <button class="tool"><svg><use href="#s-rib"/></svg>Rib</button>
            </div>
            <div class="stack">
              <button class="tool"><svg><use href="#s-decal"/></svg>Decal</button>
              <button class="tool"><svg><use href="#s-import"/></svg>Import</button>
            </div>
          </div>
          <h2>Create</h2>
        </section>

        <section class="panel">
          <div class="tools roomy">
            <button class="big narrow"><svg><use href="#b-hole"/></svg><span>Hole</span></button>
            <button class="big narrow"><svg><use href="#b-fillet"/></svg><span>Fillet</span></button>
            <div class="stack">
              <button class="tool"><svg><use href="#s-chamfer"/></svg>Chamfer</button>
              <button class="tool"><svg><use href="#s-shell"/></svg>Shell</button>
              <button class="tool"><svg><use href="#s-draft"/></svg>Draft</button>
            </div>
            <div class="stack">
              <button class="tool"><svg><use href="#s-thread"/></svg>Thread</button>
              <button class="tool"><svg><use href="#s-combine"/></svg>Combine</button>
              <button class="tool"><svg><use href="#s-thicken"/></svg>Thicken/ Offset</button>
            </div>
            <div class="stack">
              <button class="tool"><svg><use href="#s-split"/></svg>Split</button>
              <button class="tool"><svg><use href="#s-direct"/></svg>Direct</button>
              <button class="tool"><svg><use href="#s-delface"/></svg>Delete Face</button>
            </div>
          </div>
          <h2>Modify <span class="arrow large"></span></h2>
        </section>

        <section class="panel">
          <div class="tools">
            <button class="big plane"><svg><use href="#b-plane"/></svg><span>Plane</span><span class="arrow"></span></button>
            <div class="stack">
              <button class="tool"><svg><use href="#s-axis"/></svg>Axis <span class="arrow"></span></button>
              <button class="tool"><svg><use href="#s-point"/></svg>Point <span class="arrow"></span></button>
              <button class="tool"><svg><use href="#s-ucs"/></svg>UCS</button>
            </div>
          </div>
          <h2>Work Features</h2>
        </section>

        <section class="panel">
          <div class="tools centered">
            <div class="stack">
              <button class="boxed" aria-label="Rectangular"><svg><use href="#s-rect"/></svg></button>
              <button class="boxed" aria-label="Circular"><svg><use href="#s-circ"/></svg></button>
              <button class="boxed" aria-label="Mirror"><svg><use href="#s-mirror"/></svg></button>
            </div>
          </div>
          <h2>Pattern</h2>
        </section>

        <section class="panel">
          <div class="tools">
            <button class="big box"><svg><use href="#b-box"/></svg><span>Box</span><span class="arrow"></span></button>
            <div class="stack">
              <button class="tool"><svg><use href="#s-face"/></svg>Face</button>
              <button class="tool"><svg><use href="#s-convert"/></svg>Convert</button>
            </div>
          </div>
          <h2>Create Freeform</h2>
        </section>

        <section class="panel">
          <div class="tools">
            <div class="stack">
              <button class="tool"><svg><use href="#s-stitch"/></svg>Stitch</button>
              <button class="tool"><svg><use href="#s-patch"/></svg>Patch</button>
              <button class="tool"><svg><use href="#s-sculpt"/></svg>Sculpt</button>
            </div>
            <div class="stack">
              <button class="boxed shift" aria-label="Ruled surface"><svg><use href="#s-ruled"/></svg></button>
              <button class="tool"><svg><use href="#s-trim"/></svg>Trim</button>
              <button class="tool"><svg><use href="#s-extend"/></svg>Extend</button>
            </div>
            <div class="stack end">
              <button class="boxed" aria-label="Replace face"><svg><use href="#s-replace"/></svg></button>
              <button class="boxed" aria-label="Repair bodies"><svg><use href="#s-repair"/></svg></button>
            </div>
          </div>
          <h2>Surface</h2>
        </section>

        <section class="panel">
          <div class="tools centered">
            <button class="big"><svg><use href="#b-stress"/></svg><span>Stress<br>Analysis</span></button>
          </div>
          <h2>Simulation</h2>
        </section>

        <section class="panel">
          <div class="tools centered">
            <button class="big wide"><svg><use href="#b-sheet"/></svg><span>Convert to<br>Sheet Metal</span></button>
          </div>
          <h2>Convert</h2>
        </section>

        <section class="panel">
          <div class="tools centered">
            <div class="stack">
              <button class="boxed pair" aria-label="Show panels"><svg><use href="#s-more"/></svg><span class="arrow"></span></button>
            </div>
          </div>
          <h2></h2>
        </section>
      </div>

      <div class="workspace">
        <aside class="browser">
          <div class="grip">
            <span></span>
            <button aria-label="Close browser"><svg width="7" height="7" viewBox="0 0 7 7"><path d="M1 1L6 6M6 1L1 6" stroke="#000" stroke-width="1.800"/></svg></button>
          </div>
          <div class="browser-title">
            <button>Model <span class="arrow large"></span></button>
            <button aria-label="Browser help"><svg width="14" height="15" viewBox="0 0 14 15"><path d="M2 .500H12L13.500 2V11L12 12.500V14.500L9 12.500H2L.5 11V2Z" fill="#ffffa0" stroke="#111"/><path d="M4.500 5C4.500 1.800 9.500 2 9.300 5C9.200 6.500 7 6.300 7 8.300" fill="none" stroke="#1616b0" stroke-width="1.800"/><path d="M6 9.200H8V11H6Z" fill="#1616b0"/></svg></button>
          </div>
          <div class="browser-tools">
            <button aria-label="Filter"><svg width="14" height="13" viewBox="0 0 14 13"><path d="M.5.500H13.500V2L8.500 7V12.500H5.500V7L.5 2Z" fill="#8a8a8a" stroke="#111"/><path d="M3 2L6 5.500" stroke="#ddd"/></svg></button>
            <span class="line"></span>
            <button aria-label="Find"><svg width="16" height="14" viewBox="0 0 16 14"><path d="M3 1H6V4H10V1H13V4L15.500 8V13H10V9H6V13H.5V8L3 4Z" fill="#000"/><path d="M2.500 8V11M12.500 8V11M5 4V6M11 4V6" stroke="#fff"/></svg></button>
          </div>
          <ul class="tree">
            <li class="root"><svg><use href="#t-part"/></svg>Cast Lever.ipt</li>
            <li class="plus"><svg><use href="#t-bodies"/></svg>Solid Bodies(1)</li>
            <li class="plus"><svg><use href="#t-view"/></svg>View: Master</li>
            <li class="plus"><svg><use href="#t-folder"/></svg>Origin</li>
            <li class="plus"><svg><use href="#t-extrude"/></svg>Extrusion1</li>
            <li class="plus"><svg><use href="#t-extrude"/></svg>Extrusion2</li>
            <li class="plus"><svg><use href="#t-mirror"/></svg>Mirror1</li>
            <li class="plus"><svg><use href="#t-extrude"/></svg>Extrusion3</li>
            <li><svg><use href="#t-fillet"/></svg>Fillet1</li>
            <li><svg><use href="#t-fillet"/></svg>Fillet2</li>
            <li><svg><use href="#t-chamfer"/></svg>Chamfer1</li>
            <li class="plus"><svg><use href="#t-extrude"/></svg>Extrusion4</li>
            <li><svg><use href="#t-fillet"/></svg>Fillet3</li>
            <li><svg><use href="#t-sketch"/></svg>3D Sketch1</li>
            <li><svg><use href="#t-sketch"/></svg>3D Sketch2</li>
            <li class="last"><svg><use href="#t-end"/></svg>End of Part</li>
          </ul>
        </aside>

        <div class="document">
          <main class="canvas">
            <svg class="scene" viewBox="320 146 1067 718">
              <defs>
                <linearGradient id="cyl" gradientUnits="userSpaceOnUse" x1="458" y1="0" x2="606" y2="0"><stop offset="0" stop-color="#8a8a8a"/><stop offset=".03" stop-color="#6d6d6d"/><stop offset=".1" stop-color="#707070"/><stop offset=".18" stop-color="#6b6b6b"/><stop offset=".32" stop-color="#666"/><stop offset=".6" stop-color="#4d4d4d"/><stop offset=".75" stop-color="#58585a"/><stop offset=".93" stop-color="#66666a"/><stop offset=".98" stop-color="#77777a"/><stop offset="1" stop-color="#a4a4a8"/></linearGradient>
                <linearGradient id="bore"><stop offset="0" stop-color="#77777a"/><stop offset=".08" stop-color="#66666a"/><stop offset=".38" stop-color="#4c4c4c"/><stop offset=".6" stop-color="#5e5e5e"/><stop offset=".85" stop-color="#727272"/><stop offset="1" stop-color="#6a6a6a"/></linearGradient>
                <linearGradient id="bevel"><stop offset="0" stop-color="#858585"/><stop offset=".3" stop-color="#969696"/><stop offset="1" stop-color="#aeaeae"/></linearGradient>
                <linearGradient id="armside" gradientUnits="userSpaceOnUse" x1="632" y1="0" x2="1007" y2="0"><stop offset="0" stop-color="#5e6063"/><stop offset=".6" stop-color="#605f63"/><stop offset=".96" stop-color="#605f64"/><stop offset=".985" stop-color="#77777b"/><stop offset="1" stop-color="#b4b4b8"/></linearGradient>
                <linearGradient id="plate" gradientUnits="userSpaceOnUse" x1="485" y1="0" x2="862" y2="0"><stop offset="0" stop-color="#6b6b6b"/><stop offset=".8" stop-color="#696969"/><stop offset=".91" stop-color="#4f4f4f"/><stop offset=".97" stop-color="#626266"/><stop offset="1" stop-color="#98989c"/></linearGradient>
                <filter id="soft" x="-10%" y="-10%" width="120%" height="120%"><feGaussianBlur stdDeviation="3"/></filter>
                <filter id="soft2" x="-20%" y="-20%" width="140%" height="140%"><feGaussianBlur stdDeviation="4"/></filter>
                <path id="armtop" d="M585 408L908 232C921 225 934 221.500 948 221.500C981 221.500 1007 240 1006.500 262C1006 273 1001 283 990 290L632 497L706 547L560 560L480 470Z"/>
                <path id="lowtop" d="M920 345L940 310L990 306C1001 312 1006.500 322 1006.500 332C1006 343 1001 349 990 355L935 386C930 389 924 386 924 377Z"/>
                <path id="uppertop" d="M485 533C520 527 560 526 585 515C606 504 618 488 606 462L585 408L632 497L634 501L848 642C857 648 861.500 655 861.500 663C861 676 842 690 818 690C806 690 797 689 788 686L500 540Z"/>
                <path id="lowertop" d="M553 632L590 600L841 710C855 716 861.500 727 861.500 737C861 750 842 762 818 762C806 762 797 760 788 757L566 644C556 640 552 638 553 632Z"/>
                <clipPath id="c-arm"><use href="#armtop"/></clipPath>
                <clipPath id="c-low"><use href="#lowtop"/></clipPath>
                <clipPath id="c-upper"><use href="#uppertop"/></clipPath>
                <clipPath id="c-lower"><use href="#lowertop"/></clipPath>
              </defs>

              <!-- lower prong of the long arm -->
              <path d="M924 340L990 306C1001 312 1006.500 322 1006.500 332V353C1006 363 1001 370 990 377L920 419Z" fill="url(#armside)"/>
              <use href="#lowtop" fill="#b3b3b3"/>
              <g clip-path="url(#c-low)">
                <path d="M1009 318C1010 338 1004 348 990 355L935 386C928 389 924 384 924 377" fill="none" stroke="#555" stroke-width="9" filter="url(#soft)"/>
                <ellipse cx="949" cy="322" rx="28.500" ry="16.800" fill="url(#bore)"/>
                <path d="M949 325V339" stroke="#00007c" stroke-width="2"/>
              </g>
              <!-- side of the long arm with its slot -->
              <path d="M632 497L990 290C1001 283 1006.500 273 1006.500 258V283C1005 293 999 299 990 304L940 334C928 341 924 348 924 356V377C924 386 929 390 936 386L990 355V377L706 547Z" fill="url(#armside)"/>
              <path d="M706 547L990 377C998 372 1004 366 1006 358" fill="none" stroke="#8b8b92"/>
              <path d="M990 304L940 334C928 341 924 348 924 356V377" fill="none" stroke="#a4a4aa"/>
              <use href="#armtop" fill="#b5b5b5"/>
              <g clip-path="url(#c-arm)">
                <path d="M1009 244C1012 264 1008 280 990 290L632 497" fill="none" stroke="#4a4a4a" stroke-width="11" filter="url(#soft)"/>
                <path d="M585 408L908 232" stroke="#a6a6a6" stroke-width="2"/>
              </g>
              <ellipse cx="948.500" cy="250.500" rx="32.500" ry="19" fill="url(#bevel)"/>
              <ellipse cx="949" cy="252.800" rx="28.500" ry="16.300" fill="url(#bore)"/>
              <path d="M949 254V269" stroke="#00007c" stroke-width="2"/>
              <path d="M946 251H950V255H946Z" fill="#ff0"/>

              <!-- boss -->
              <path d="M458.500 437V654C460 677 492 695.500 532 695.500C556 695.500 577 690 590 680L605 600V437Z" fill="url(#cyl)"/>

              <!-- lower plate -->
              <path d="M485 625L553 560L560 640L788 757L861.500 735V763C860 777 841 785.500 818 785.500C806 785.500 797 782 788 777L590 680C560 665 515 648 485 625Z" fill="url(#plate)"/>
              <path d="M534 651C550 657 570 669 590 679L788 777C797 782 806 785.500 818 785.500C841 785.500 860 777 861 763" fill="none" stroke="#505052"/>
              <path d="M502 635C512 642 520 645 532 650" fill="none" stroke="#d0d0d0"/>
              <use href="#lowertop" fill="#b5b5b5"/>
              <g clip-path="url(#c-lower)">
                <path d="M864 722C868 740 862 751 850 757C836 765 806 765 788 757L566 644C556 640 550 636 553 628" fill="none" stroke="#646464" stroke-width="14" filter="url(#soft)"/>
                <path d="M553 590H592L563 618L553 632Z" fill="#5d5d63" filter="url(#soft)"/>
              </g>
              <ellipse cx="661.500" cy="638" rx="21.500" ry="12.700" fill="url(#bore)"/>
              <ellipse cx="740" cy="684" rx="21.500" ry="12.300" fill="url(#bore)"/>
              <ellipse cx="818" cy="729" rx="21" ry="12.300" fill="url(#bore)"/>
              <path d="M802 751H810" stroke="#e2e2e2"/>

              <!-- web between the plates and the pocket wall -->
              <path d="M556 592L600 600L563 618L556 622Z" fill="#5f5f66"/>
              <path d="M485 533L560 570L550 590V628C550 634 552 637 556 640L590 660C545 655 510 645 485 625Z" fill="#6a6a6a"/>
              <path d="M553 628V600Q553 592 562 591" fill="none" stroke="#47474a" stroke-width="4" filter="url(#soft)"/>
              <path d="M556 596Q559 592 564 593" fill="none" stroke="#c4c4cc"/>

              <!-- upper plate -->
              <path d="M488 534L788 682L861.500 660V690C860 703 841 712 818 712C806 712 798 709 790 705L567 593C559 589 553 590 550 596L530 600Z" fill="url(#plate)"/>
              <path d="M567 593L790 705C798 709 806 712 818 712C841 712 860 703 861 690" fill="none" stroke="#505052"/>
              <use href="#uppertop" fill="#b5b5b5"/>
              <g clip-path="url(#c-upper)">
                <path d="M864 648C868 668 860 680 850 684C838 693 806 694 788 686L490 538" fill="none" stroke="#646464" stroke-width="14" filter="url(#soft)"/>
              </g>
              <path d="M520 529C548 526 566 523 583 514C603 503 610 488 604 466" fill="none" stroke="#4c4c4c" stroke-width="18" filter="url(#soft2)"/>
              <path d="M634 500L706 547L848 642" fill="none" stroke="#a0a0a0"/>
              <path d="M634 500L706 547" fill="none" stroke="#e4e4e4" stroke-dasharray="2 2"/>
              <path d="M525 537H532" stroke="#dedede"/>
              <path d="M802 679H811" stroke="#e2e2e2"/>

              <!-- boss above the fillet -->
              <path d="M530 437H605V484C603 500 590 512 570 518C550 523 510 527 485 533L470 500Z" fill="url(#cyl)"/>
              <ellipse cx="531.700" cy="436.700" rx="73.200" ry="42" fill="#b5b5b5"/>
              <ellipse cx="531.700" cy="436" rx="47.300" ry="27.300" fill="url(#bevel)"/>
              <ellipse cx="531.300" cy="439.200" rx="43" ry="25" fill="url(#bore)"/>
              <path d="M531.500 438V464" stroke="#00007c" stroke-width="2"/>
              <path d="M529 435H533V439H529Z" fill="#ff0"/>

              <!-- plate holes -->
              <g fill="url(#bevel)"><ellipse cx="661.500" cy="566.500" rx="25.500" ry="14.800"/><ellipse cx="740" cy="611.500" rx="25.500" ry="14.800"/><ellipse cx="818" cy="656.500" rx="25.500" ry="14.800"/></g>
              <g fill="url(#bore)"><ellipse cx="661.500" cy="569" rx="21.500" ry="12.300"/><ellipse cx="740" cy="614" rx="21.500" ry="12.300"/><ellipse cx="818" cy="659" rx="21.500" ry="12.300"/></g>

              <!-- axis triad -->
              <path d="M372.500 810V794" stroke="#0000a0" stroke-width="1.500"/>
              <path d="M372.500 785L378 795Q372.500 799 367 795Z" fill="#00009c"/>
              <path d="M372.500 810L386 801" stroke="#00b000"/>
              <path d="M394 797L383 796L383 803L388 806Z" fill="#008c00"/>
              <path d="M372.500 810L386 818" stroke="#b00000"/>
              <path d="M394 822L388 812L383 816V823Z" fill="#8c0000"/>
              <g class="axis-labels"><text x="368" y="784" fill="#3838ff">Z</text><text x="394" y="799" fill="#38ff38">Y</text><text x="394" y="829" fill="#ff3838">X</text></g>
            </svg>

            <div class="doc-buttons">
              <button aria-label="Minimize document"><svg width="13" height="12" viewBox="0 0 13 12"><path d="M.5 6.500H12.500V9.500H.5Z" fill="#fff" stroke="#555a62"/></svg></button>
              <button aria-label="Restore document"><svg width="13" height="12" viewBox="0 0 13 12"><path d="M3.500 2.500V.500H11.500V8.500H9.500M1.500 2.500H9.500V11.500H1.500ZM4.500 5.500H6.500V8.500H4.500Z" fill="#fff" stroke="#555a62"/></svg></button>
              <button aria-label="Close document"><svg width="13" height="12" viewBox="0 0 13 12"><path d="M2.500 2L10.500 10M10.500 2L2.500 10" stroke="#555a62" stroke-width="4"/><path d="M2.500 2L10.500 10M10.500 2L2.500 10" stroke="#fff" stroke-width="1.500"/></svg></button>
            </div>

            <svg class="view-cube" width="76" height="82" viewBox="0 0 76 82">
              <path d="M38 2L74 18L38 39L2 18Z" fill="#ebebeb"/>
              <path d="M2 18L38 39V80L7 57Z" fill="#dcdcdc"/>
              <path d="M74 18L38 39V80L70 57Z" fill="#e2e2e2"/>
              <path d="M31 35L38 31L45 35V43L38 47L31 43Z" fill="#d6d9dc"/>
              <path d="M38 2L74 18L70 57L38 80L7 57L2 18ZM2 18L38 39L74 18M38 39V80" fill="none" stroke="#8c8c8c"/>
              <g class="cube-labels">
                <text transform="matrix(.86 .4 -.7 .5 37 22)">FRONT</text>
                <text transform="matrix(0 .9 -.8 .5 53 51)">RIGHT</text>
                <text transform="matrix(-.72 -.46 0 -1 21 47)">BOTTOM</text>
              </g>
            </svg>

            <div class="nav-bar">
              <button class="dot" aria-label="Close navigation bar"><svg width="9" height="9" viewBox="0 0 9 9"><circle cx="4.500" cy="4.500" r="4.500" fill="#b5b5b5"/><path d="M2.500 2.500L6.500 6.500M6.500 2.500L2.500 6.500" stroke="#fff" stroke-width="1.300"/></svg></button>
              <button class="wheel" aria-label="Steering wheel"><svg width="24" height="24" viewBox="0 0 24 24"><path d="M12 1H21Q23 1 23 3V12A11 11 0 1 1 12 1Z" fill="#e6e6ea" stroke="#999ca2"/><circle cx="12" cy="12" r="8" fill="#f4f4f6" stroke="#c4c4c8"/><circle cx="12" cy="12" r="5.500" fill="#fff" stroke="#999ca2"/><path d="M6 18L8.500 15.500M18 18L15.500 15.500" stroke="#999ca2"/></svg></button>
              <span class="arrow"></span>
              <hr>
              <button aria-label="Pan"><svg width="18" height="18" viewBox="0 0 18 18"><path d="M6 16C4 13 1 11 1.500 9.500C2.500 8.500 4 10 5.500 11L3.500 5C4 3.500 5 4 5.500 5L7 8.500L6.500 2.500C7 1 8.500 1.500 8.700 2.500L9.200 8L10.500 2.500C11.500 1.500 12.500 2 12.300 3.500L11.800 8.500L14 5C15 4 16 5 15.500 6.500L13.500 12Q13 15 12 16.500Z" fill="#f8f8f8" stroke="#999ca2"/></svg></button>
              <button aria-label="Zoom"><svg width="18" height="18" viewBox="0 0 18 18"><circle cx="6.500" cy="8" r="5" fill="#eef2f2" stroke="#999ca2"/><path d="M10.500 12L14.500 16" stroke="#999ca2" stroke-width="2.500"/><path d="M12 4H17M14.500 1.500V6.500M12 8.500H17" stroke="#888"/></svg></button>
              <span class="arrow"></span>
              <button aria-label="Orbit"><svg width="18" height="18" viewBox="0 0 18 18"><ellipse cx="8" cy="9" rx="3.500" ry="7.500" fill="none" stroke="#999ca2"/><ellipse cx="9" cy="9" rx="7.500" ry="3.300" fill="none" stroke="#999ca2"/><path d="M9 9H15M12 6V12M5 6H9M7 4V8" stroke="#888"/></svg></button>
              <span class="arrow"></span>
              <button aria-label="Look at"><svg width="18" height="18" viewBox="0 0 18 18"><path d="M1.500 6.500H16.500V16.500H1.500Z" fill="#f2f2f2" stroke="#999ca2"/><path d="M4.500 9.500H13.500V13.500H4.500Z" fill="#d8d8dc" stroke="#999ca2"/><path d="M3 5L7 2V5L13 1.500V5" fill="none" stroke="#999ca2"/></svg></button>
              <button class="dot" aria-label="Navigation options"><svg width="9" height="9" viewBox="0 0 9 9"><circle cx="4.500" cy="4.500" r="4" fill="#eee" stroke="#b0b0b0"/><path d="M2 3.500H7L4.500 7Z" fill="#b0b0b0"/></svg></button>
            </div>
          </main>

          <div class="doc-tabs">
            <button class="layout" aria-label="Cascade"><svg width="17" height="15" viewBox="0 0 17 15"><g fill="#f4f4f4" stroke="#333b45"><path d="M.5.500H12.500V7.500H.5Z"/><path d="M2.500 3.500H14.500V10.500H2.500Z"/><path d="M4.500 6.500H16.500V14.500H4.500Z"/></g><path d="M4.500 7.500H16.500" stroke="#333b45"/></svg></button>
            <button class="layout" aria-label="Arrange"><svg width="17" height="15" viewBox="0 0 17 15"><path d="M1.500 1.500H7.500V6.500H1.500ZM9.500 1.500H15.500V6.500H9.500ZM1.500 8.500H7.500V13.500H1.500ZM9.500 8.500H15.500V13.500H9.500Z" fill="#f4f4f4" stroke="#333b45"/><path d="M1.500 2.500H7.500M9.500 2.500H15.500M1.500 9.500H7.500M9.500 9.500H15.500" stroke="#333b45"/></svg></button>
            <button class="layout" aria-label="Tile horizontally"><svg width="17" height="15" viewBox="0 0 17 15"><path d="M1.500 1.500H15.500V6.500H1.500ZM1.500 8.500H15.500V13.500H1.500Z" fill="#f4f4f4" stroke="#333b45"/><path d="M1.500 2.500H15.500M1.500 9.500H15.500" stroke="#333b45"/></svg></button>
            <button class="layout" aria-label="Tile vertically"><svg width="17" height="15" viewBox="0 0 17 15"><path d="M1.500 1.500H7.500V13.500H1.500ZM9.500 1.500H15.500V13.500H9.500Z" fill="#f4f4f4" stroke="#333b45"/><path d="M1.500 2.500H7.500M9.500 2.500H15.500" stroke="#333b45"/></svg></button>
            <button class="layout" aria-label="Document list"><svg width="17" height="15" viewBox="0 0 17 15"><path d="M4 6H13L8.500 1.500Z" fill="#222b36"/></svg></button>
            <a href="#" class="doc-tab">My Home</a>
            <a href="#" class="doc-tab current">Cast Lever.ipt <svg width="8" height="8" viewBox="0 0 8 8"><path d="M1 1L7 7M7 1L1 7" stroke="#555" stroke-width="2.600"/><path d="M1 1L7 7M7 1L1 7" stroke="#fff"/></svg></a>
          </div>
        </div>
      </div>

      <footer class="status">
        <span class="message">For Help, press F1</span>
        <span class="cell">1</span>
        <span class="cell">1</span>
        <span class="cell"><svg width="9" height="9" viewBox="0 0 9 9"><path d="M6 0H8V2H6ZM3 3H5V5H3ZM6 3H8V5H6ZM0 6H2V8H0ZM3 6H5V8H3ZM6 6H8V8H6Z" fill="#fff"/></svg></span>
      </footer>
    </div>
  </div>

</body>
</html>
```

FILE: styles.css
```css
* {
  box-sizing: border-box;
}

body {
  margin: 0;
  background: #fff;
  font-family: "Open Sans", "Noto Sans", sans-serif;
  font-size: 11px;
  color: #333;
}

button,
input,
select {
  font: inherit;
  color: inherit;
  margin: 0;
  padding: 0;
  border: 0;
  background: none;
}

button {
  display: flex;
  align-items: center;
  justify-content: center;
  white-space: nowrap;
}

a {
  color: inherit;
  text-decoration: none;
  white-space: nowrap;
}

svg {
  display: block;
  flex: none;
}

.sprite {
  position: absolute;
  width: 0;
  height: 0;
}

.arrow {
  flex: none;
  display: inline-block;
  border: 3px solid transparent;
  border-top-color: #444;
  border-bottom: 0;
}

.arrow.large {
  border-width: 4px 4px 0;
}

/* window frame */

.window {
  height: 100vh;
  min-height: 600px;
  display: flex;
  flex-direction: column;
  padding: 0 7px 7px;
  border: 1px solid #26262a;
  border-radius: 8px;
  background: linear-gradient(#8e8e8e 0, #a8a8a8 30px, #b4b4b4 150px, #dcdcdc 249px, #8f8f8f 250px);
}

.chrome {
  display: grid;
  grid-template-columns: 41px 1fr;
  grid-template-rows: 30px 19px;
}

.app-button {
  grid-row: 1 / 3;
  margin-top: 7px;
  padding-bottom: 2px;
  display: grid;
  grid-template-columns: 28px 8px;
  justify-content: center;
  justify-items: center;
  border: 1px solid #111;
  border-radius: 1px;
  background: linear-gradient(#b0b0b0, #7c7c7c);
}

.edition {
  padding-left: 4px;
  font-size: 8px;
  line-height: 9px;
  color: #111;
}

.titlebar {
  display: flex;
  align-items: flex-end;
}

.quick-access,
.info-center {
  display: flex;
  align-items: center;
  height: 22px;
  padding-bottom: 1px;
  border-top: 1px solid #f2f2f2;
  background: linear-gradient(#e6e6e6, #b4b4b4);
}

.quick-access {
  padding-left: 5px;
}

.qa {
  width: 24px;
  height: 20px;
}

.qa svg,
.combo svg,
.tool svg,
.boxed svg,
.tree svg {
  width: 16px;
  height: 16px;
}

.qa-drop {
  width: 12px;
  height: 20px;
}

.qa-more {
  flex-direction: column;
  gap: 2px;
  width: 16px;
  height: 20px;
}

.bar {
  width: 8px;
  height: 1px;
  background: #333;
}

.fx {
  font: 16px "Liberation Serif", serif;
  color: #222;
}

.fx sub {
  font-size: 11px;
  font-weight: bold;
  line-height: 1px;
}

.divider {
  width: 1px;
  height: 20px;
  margin: 0 3px 0 2px;
  background: #aaa;
}

.combo {
  display: flex;
  align-items: center;
  width: 100px;
  height: 22px;
  padding: 0 3px;
  border: 1px solid #555;
  background: linear-gradient(#f4f4f4, #c6c6c6);
  color: #000;
}

.combo select {
  appearance: none;
  flex: 1;
  min-width: 0;
  padding-left: 2px;
}

.combo .arrow {
  border-width: 4px 4px 0;
}

.doc-title {
  width: 112px;
  padding: 0 0 8px 14px;
  text-align: center;
  white-space: nowrap;
  color: #222;
  line-height: 14px;
}

.info-center .expand {
  width: 13px;
  height: 20px;
}

.expand::before {
  content: "";
  border: 4px solid transparent;
  border-left: 5px solid #333;
  border-right: 0;
}

.info-center input {
  width: 180px;
  height: 20px;
  padding: 0 5px;
  background: linear-gradient(#e0e0e0, #f4f4f4);
}

.info-center input::placeholder {
  color: #7a7a7a;
  opacity: 1;
}

.user-name {
  width: 96px;
  height: 15px;
  background: #d0d0d0;
}

.info-center .divider {
  margin: 0 5px;
}

.window-buttons {
  display: flex;
  align-self: flex-start;
  margin-left: auto;
  border: 1px solid #4a4a4a;
  border-top: 0;
  border-radius: 0 0 5px 5px;
  overflow: hidden;
}

.win {
  width: 27px;
  height: 18px;
  border-right: 1px solid #4a4a4a;
  background: linear-gradient(#dcdcdc 0, #bdbdbd 45%, #8d8d8d 50%, #b5b5b5);
}

.win.close {
  width: 47px;
  border-right: 0;
  background: linear-gradient(#e2a494 0, #cf6c58 45%, #b5301c 50%, #d4614a);
}

.tabs {
  display: flex;
  align-items: stretch;
  padding-left: 4px;
  border-top: 1px solid #6a6a6a;
  background: #9d9d9d;
  color: #222;
  line-height: 18px;
}

.tabs a {
  padding: 0 10px 0 11px;
}

.tabs .active {
  margin-right: 3px;
  padding: 0 9px 0 7px;
  background: linear-gradient(#d9d9d9, #fff);
}

.minimize-ribbon {
  gap: 4px;
  margin-left: 22px;
}

.client {
  flex: 1;
  min-height: 0;
  display: flex;
  flex-direction: column;
  box-shadow: 0 0 0 1px #5a5a5a, 0 0 0 2px #dcdcdc;
}

/* ribbon */

.ribbon {
  display: grid;
  grid-template-columns: 79px 301px 362px 127px 49px 119px 160px 68px 73px 1fr;
  height: 96px;
  padding-bottom: 1px;
  background: linear-gradient(#fff, #fafafa);
  border-bottom: 1px solid #6d6d6d;
}

.panel {
  display: flex;
  flex-direction: column;
  border-right: 1px solid #bcbcbc;
}

.panel:last-child {
  border-right: 0;
}

.panel h2 {
  height: 19px;
  margin: 0 1px;
  border-top: 1px solid #d2d2d2;
  background: #eee;
  font-size: 11px;
  font-weight: normal;
  line-height: 18px;
  text-align: center;
  white-space: nowrap;
}

.panel h2 .arrow {
  margin: 0 0 2px 4px;
}

.tools {
  flex: 1;
  display: flex;
  padding: 2px 0 0 2px;
}

.tools.centered {
  justify-content: center;
  padding-left: 0;
}

.big {
  width: 46px;
  flex-direction: column;
  justify-content: flex-start;
  padding-top: 3px;
  line-height: 15px;
}

.big svg {
  width: 32px;
  height: 32px;
  margin-bottom: 4px;
}

.big.narrow {
  width: 38px;
}

.big.box {
  width: 41px;
}

.big.plane {
  width: 51px;
}

.big.wide {
  width: 74px;
}

.big .arrow {
  margin-top: 3px;
}

.big .arrow.corner {
  align-self: flex-end;
  margin-top: -10px;
}

.stack {
  display: flex;
  flex-direction: column;
  align-items: flex-start;
  margin-left: 5px;
}

.stack + .stack {
  margin-left: 10px;
}

.roomy .stack + .stack {
  margin-left: 12px;
}

.centered .stack {
  margin-left: 0;
}

.tool {
  gap: 5px;
  height: 24px;
}

.roomy .tool {
  gap: 6px;
}

.tool .arrow {
  margin-left: 2px;
}

.boxed {
  width: 24px;
  height: 22px;
  margin: 1px 0;
  border: 1px solid #d0d0d0;
  background: #f2f2f2;
}

.boxed.shift {
  margin-left: -4px;
}

.boxed.pair {
  gap: 6px;
  width: 35px;
}

.stack.end {
  margin-left: auto;
  padding-right: 2px;
}

/* model browser */

.workspace {
  flex: 1;
  min-height: 0;
  display: grid;
  grid-template-columns: 311px 1fr;
}

.browser {
  display: flex;
  flex-direction: column;
  padding: 2px 4px 4px 3px;
  background: #f0f0f0;
}

.grip {
  display: flex;
  align-items: center;
  gap: 4px;
  height: 12px;
  margin-bottom: 1px;
}

.grip span {
  flex: 1;
  height: 5px;
  border: 1px solid #a0a0a0;
  border-left: 0;
  background: #fff;
}

.grip button {
  width: 10px;
}

.browser-title {
  display: flex;
  align-items: center;
  justify-content: space-between;
  height: 21px;
  padding: 0 4px 0 8px;
  border-bottom: 1px solid #999;
  background: #ababab;
  color: #fff;
  font-size: 13px;
  font-weight: 600;
}

.browser-title .arrow {
  margin-left: 4px;
  border-top-color: #fff;
}

.browser-tools {
  display: flex;
  align-items: center;
  gap: 7px;
  height: 27px;
  padding: 0 4px 4px;
}

.browser-tools .line {
  width: 1px;
  height: 18px;
  background: #888;
}

.browser-tools .line + button {
  margin-left: 1px;
}

.tree {
  flex: 1;
  min-height: 0;
  margin: 0;
  padding: 0 0 0 5px;
  border: 1px solid #646464;
  background: #fff;
  list-style: none;
  font-family: "DejaVu Sans Condensed", "Liberation Sans", sans-serif;
  color: #000;
}

.tree li {
  position: relative;
  display: flex;
  align-items: center;
  gap: 2px;
  height: 18px;
  padding-left: 19px;
  white-space: nowrap;
}

.tree .root {
  padding-left: 0;
}

/* branch lines */
.tree li:not(.root) {
  background:
    linear-gradient(#808080, #808080) 3px 9px / 12px 1px no-repeat,
    linear-gradient(#808080, #808080) 3px 0 / 1px 18px no-repeat;
}

.tree li.last {
  background:
    linear-gradient(#808080, #808080) 3px 9px / 12px 1px no-repeat,
    linear-gradient(#808080, #808080) 3px 0 / 1px 9px no-repeat;
}

.tree .plus::before {
  content: "";
  box-sizing: border-box;
  position: absolute;
  left: -1px;
  top: 5px;
  width: 9px;
  height: 9px;
  border: 1px solid #808080;
  background:
    linear-gradient(#000, #000) center / 5px 1px no-repeat,
    linear-gradient(#000, #000) center / 1px 5px no-repeat,
    #fff;
}

/* drawing area */

.document {
  min-width: 0;
  display: flex;
  flex-direction: column;
  border-left: 1px solid #5f5f5f;
}

.canvas {
  position: relative;
  flex: 1;
  min-height: 0;
  background: #fff;
}

.scene {
  width: 100%;
  height: 100%;
}

.axis-labels {
  font: 12px "Liberation Sans", sans-serif;
}

.doc-buttons {
  position: absolute;
  top: 6px;
  right: 3px;
  display: flex;
  gap: 7px;
}

.view-cube {
  position: absolute;
  top: 47px;
  right: 26px;
}

.cube-labels {
  font: bold 10px "Liberation Sans", sans-serif;
  fill: #a2a2a2;
  text-anchor: middle;
}

.nav-bar {
  position: absolute;
  top: 144px;
  right: 2px;
  display: flex;
  flex-direction: column;
  align-items: center;
  width: 36px;
  height: 200px;
  border: 2px solid #c2c2c2;
  border-radius: 6px;
  background: #f3f3f3;
}

.nav-bar button {
  height: 24px;
}

.nav-bar .dot {
  align-self: flex-end;
  height: 9px;
  margin: 1px 3px 2px;
}

.nav-bar .dot:first-child {
  margin-bottom: 9px;
}

.nav-bar .dot:last-child {
  margin-top: auto;
}

.nav-bar .arrow {
  margin: 4px 0 3px;
  border-top-color: #999;
}

.nav-bar .wheel + .arrow {
  margin: 8px 0 4px;
}

.nav-bar hr {
  width: 26px;
  height: 1px;
  margin: 2px 0;
  border: 0;
  background: #c2c2c2;
}

/* document tabs */

.doc-tabs {
  display: flex;
  height: 20px;
  border-top: 1px solid #6d6d6d;
  background: linear-gradient(#dedede, #b2b2b2);
  color: #222;
}

.layout {
  width: 20px;
  border: 1px solid #444;
  border-left: 0;
  background: #e4e6e9;
}

.layout:first-child {
  width: 19px;
}

.doc-tab {
  display: flex;
  gap: 5px;
  height: 18px;
  padding: 0 10px 0 8px;
  border: 1px solid #666;
  border-top: 0;
  border-radius: 0 0 6px 6px;
  background: linear-gradient(#d6d6d6, #bebebe);
  line-height: 18px;
}

.doc-tab.current {
  background: #fff;
  color: #000;
}

.doc-tab svg {
  margin-top: 3px;
}

/* status bar */

.status {
  display: flex;
  align-items: center;
  height: 25px;
  border-top: 1px solid #8c8c8c;
  background: linear-gradient(#fdfdfd, #b2b2b2);
  color: #000;
}

.message {
  flex: 1;
  padding-left: 1px;
}

.cell {
  width: 39px;
  height: 21px;
  padding-left: 8px;
  border-left: 1px solid #c8c8c8;
  line-height: 21px;
}

.cell:last-child {
  width: 20px;
  padding: 11px 0 0 9px;
}
```
